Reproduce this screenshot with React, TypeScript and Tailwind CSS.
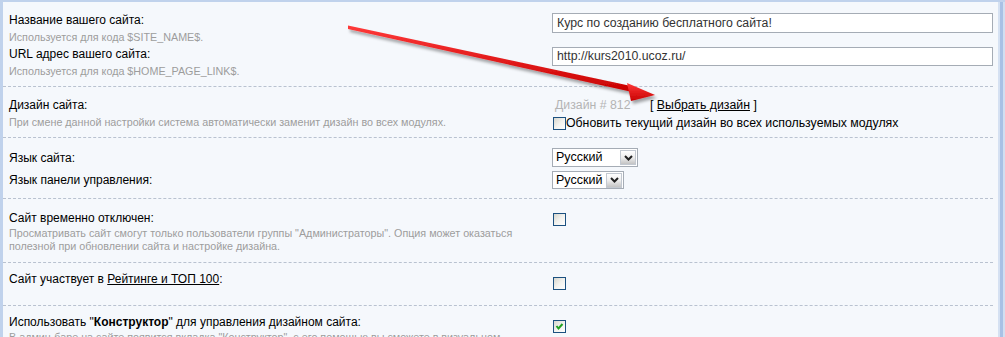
import React from 'react';

const Checkbox: React.FC<{ checked?: boolean }> = ({ checked }) => (
  <span className="relative inline-block w-[13px] h-[13px] border border-[#1c5180] bg-gradient-to-br from-[#d6d6ce] via-[#f2f2ee] to-white shrink-0">
    {checked && (
      <svg className="absolute left-0 top-0" width="11" height="11" viewBox="0 0 11 11">
        <path d="M2.5 5 L4.5 7.5 L8.5 3" fill="none" stroke="#21a121" strokeWidth="2" />
      </svg>
    )}
  </span>
);

const Select: React.FC<{ width: string; height: string }> = ({ width, height }) => (
  <div className={`flex items-center justify-between border border-[#a5acb5] bg-white ${width} ${height}`}>
    <span className="pl-[3px] text-[12.5px] leading-none text-black">Русский</span>
    <span className="mr-[1px] w-[16px] h-[15px] flex items-center justify-center border border-[#c3c9d1] bg-gradient-to-b from-white via-[#eeeeee] to-[#c4c4c4]">
      <svg width="9" height="6" viewBox="0 0 9 6">
        <path d="M1 1 L4.5 4.5 L8 1" fill="none" stroke="#222" strokeWidth="2" />
      </svg>
    </span>
  </div>
);

const Label: React.FC<{ children: React.ReactNode }> = ({ children }) => (
  <div className="h-[17px] text-[12px] leading-[17px] text-black whitespace-nowrap">{children}</div>
);

const Hint: React.FC<{ children: React.ReactNode; className?: string }> = ({ children, className = '' }) => (
  <div className={`text-[10.75px] leading-[13px] text-[#9d9d9d] ${className}`}>{children}</div>
);

const Arrow: React.FC = () => (
  <svg className="absolute left-0 top-0 pointer-events-none" width="1005" height="337">
    <defs>
      <linearGradient id="red" x1="0" y1="0" x2="0" y2="1">
        <stop offset="0" stopColor="#ff3a3a" />
        <stop offset="1" stopColor="#c80000" />
      </linearGradient>
      <filter id="shadow" x="-10%" y="-50%" width="120%" height="200%">
        <feDropShadow dx="2" dy="3" stdDeviation="1.5" floodColor="#000" floodOpacity="0.35" />
      </filter>
    </defs>
    <g filter="url(#shadow)">
      <polygon points="348,25.5 348,29 630,91.5 631,86" fill="url(#red)" />
      <polygon points="655,95 627,83 631,101" fill="url(#red)" />
    </g>
  </svg>
);

export default function App() {
  return (
    <div className="relative w-[1005px] h-[337px] overflow-hidden flex bg-[#f5f8fc] font-['Liberation_Sans',Arial,sans-serif]">
      <div className="flex-1 border-l-[3px] border-t-2 border-[#c0d2ec] pr-[5px]">
        {/* site name / url */}
        <div className="flex border-b border-dashed border-[#b9c2d0] pt-[10px] pb-[6px]">
          <div className="w-[549px] pl-[6px]">
            <Label>Название вашего сайта:</Label>
            <Hint className="my-[2px]">Используется для кода $SITE_NAME$.</Hint>
            <Label>URL адрес вашего сайта:</Label>
            <Hint className="my-[2px]">Используется для кода $HOME_PAGE_LINK$.</Hint>
          </div>
          <div className="flex-1">
            <div className="mt-[1px] h-[20px] border border-[#a5acb5] bg-white pl-[4px] text-[12.3px] leading-[18px] text-[#333]">
              Курс по созданию бесплатного сайта!
            </div>
            <div className="mt-[14px] h-[19px] border border-[#a5acb5] bg-white pl-[4px] text-[12.3px] leading-[17px] text-[#333]">
              http://kurs2010.ucoz.ru/
            </div>
          </div>
        </div>

        {/* design */}
        <div className="flex border-b border-dashed border-[#b9c2d0] pt-[10px] pb-[6px]">
          <div className="w-[549px] pl-[6px]">
            <Label>Дизайн сайта:</Label>
            <Hint className="my-[2px]">При смене данной настройки система автоматически заменит дизайн во всех модулях.</Hint>
          </div>
          <div className="flex-1">
            <div className="flex h-[17px] items-center text-[12.3px] leading-[17px]">
              <span className="pl-[3px] w-[98px] text-[#b4b4b4]">Дизайн # 812</span>
              <span className="text-black">
                [ <span className="underline">Выбрать дизайн</span> ]
              </span>
            </div>
            <div className="mt-[2px] flex items-center h-[15px] pl-[1px] text-[12.3px] text-black whitespace-nowrap">
              <Checkbox />
              <span>Обновить текущий дизайн во всех используемых модулях</span>
            </div>
          </div>
        </div>

        {/* language */}
        <div className="flex border-b border-dashed border-[#b9c2d0] pt-[10px] pb-[9px]">
          <div className="w-[549px] pl-[6px] text-[12px] text-black">
            <div className="h-[19px] leading-[21px]">Язык сайта:</div>
            <div className="mt-[4px] h-[18px] leading-[18px]">Язык панели управления:</div>
          </div>
          <div className="flex-1">
            <Select width="w-[86px]" height="h-[19px]" />
            <div className="mt-[4px]">
              <Select width="w-[72px]" height="h-[18px]" />
            </div>
          </div>
        </div>

        {/* offline */}
        <div className="flex border-b border-dashed border-[#b9c2d0] pt-[11px] pb-[9px]">
          <div className="w-[549px] pl-[6px]">
            <Label>Сайт временно отключен:</Label>
            <Hint>
              Просматривать сайт смогут только пользователи группы "Администраторы". Опция может оказаться
              <br />
              полезной при обновлении сайта и настройке дизайна.
            </Hint>
          </div>
          <div className="flex-1 pl-[1px] -mt-[1px]">
            <Checkbox />
          </div>
        </div>

        {/* rating */}
        <div className="flex border-b border-dashed border-[#b9c2d0] pt-[8px] pb-[8px]">
          <div className="w-[549px] pl-[6px]">
            <Label>
              Сайт участвует в <span className="underline">Рейтинге и ТОП 100</span>:
            </Label>
          </div>
          <div className="flex-1 pl-[1px] pt-[2px]">
            <Checkbox />
          </div>
        </div>

        {/* constructor */}
        <div className="flex pt-[8px]">
          <div className="w-[549px] pl-[6px]">
            <Label>
              Использовать "<b>Конструктор</b>" для управления дизайном сайта:
            </Label>
            <Hint className="whitespace-nowrap">
              В админ-баре на сайте появится вкладка "Конструктор", с его помощью вы сможете в визуальном
            </Hint>
          </div>
          <div className="flex-1 pl-[1px] pt-[2px]">
            <Checkbox checked />
          </div>
        </div>
      </div>
      <div className="w-[7px] flex border-t-2 border-[#c0d2ec]">
        <div className="w-[2px] bg-[#d5e1f2]" />
        <div className="w-[3px] bg-[#a9c1e5]" />
        <div className="w-[2px] bg-[#d2dff1]" />
      </div>
      <Arrow />
    </div>
  );
}
